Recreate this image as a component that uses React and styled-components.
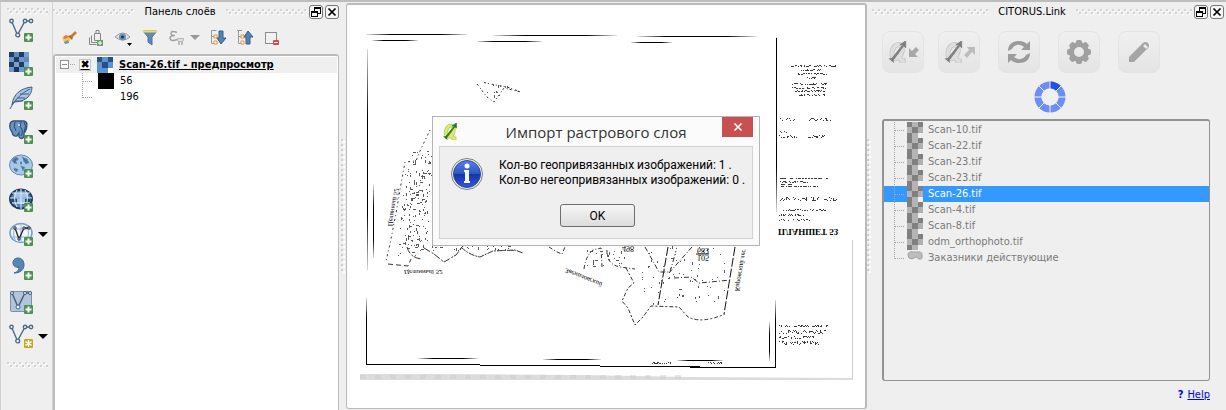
import React from 'react';
import styled, { createGlobalStyle } from 'styled-components';

const GlobalStyle = createGlobalStyle`
  * { box-sizing: border-box; }
  body {
    margin: 0;
    background: #efefef;
    color: #000;
    font: 11px/16px "DejaVu Sans Condensed", "DejaVu Sans", sans-serif;
  }
  button, input { font: inherit; margin: 0; padding: 0; }
`;

const Shell = styled.div`
  display: flex;
  min-height: 100vh;
  border-top: 2px solid #bdbdbd;
  overflow: hidden;
`;

const Grip = styled.div`
  height: 6px;
  flex: 1;
  background:
    conic-gradient(from 270deg at 2px 2px, #d2d2d2 90deg, transparent 0) 0 0 / 6px 6px repeat-x,
    conic-gradient(from 270deg at 2px 2px, #fff 90deg, transparent 0) 1px 1px / 6px 6px repeat-x,
    conic-gradient(from 270deg at 2px 2px, #d2d2d2 90deg, transparent 0) 3px 3px / 6px 6px repeat-x,
    conic-gradient(from 270deg at 2px 2px, #fff 90deg, transparent 0) 4px 4px / 6px 6px repeat-x;
`;

const Splitter = styled.div`
  flex: none;
  width: 5px;
  height: 134px;
  align-self: center;
  background:
    conic-gradient(from 270deg at 2px 2px, #cfcfcf 90deg, transparent 0) 0 0 / 5px 5px repeat-y,
    conic-gradient(from 270deg at 2px 2px, #fff 90deg, transparent 0) 2px 2px / 5px 5px repeat-y;
`;

const ToolColumn = styled.nav`
  flex: none;
  width: 53px;
  padding: 6px 4px 0 6px;
  border-left: 1px solid #cfcfcf;
  border-right: 1px solid #d4d4d4;
  display: flex;
  flex-direction: column;
`;

const ToolGrip = styled(Grip)`
  flex: none;
`;

const Tools = styled.div`
  display: grid;
  gap: 8px;
  padding: 3px 0 13px 1px;
`;

const ToolRow = styled.div`
  display: flex;
  align-items: center;
  justify-content: space-between;
  height: 26px;
`;

const PlainButton = styled.button`
  border: 0;
  background: none;
  display: flex;
  align-items: center;
  justify-content: center;
  color: inherit;
`;

const Dock = styled.section`
  flex: none;
  display: flex;
  flex-direction: column;
  width: ${(p) => p.$width};
  padding-right: 2px;
`;

const TitleBar = styled.header`
  display: flex;
  align-items: center;
  gap: 2px;
  height: 19px;
  padding-top: 1px;
`;

const TitleText = styled.h2`
  margin: 0 8px;
  font-size: 11px;
  font-weight: 400;
  line-height: 16px;
  white-space: nowrap;
`;

const FrameButton = styled.button`
  width: 14px;
  height: 14px;
  flex: none;
  display: flex;
  align-items: center;
  justify-content: center;
  background: #f6f6f6;
  border: 1px solid #777;
  border-radius: 3px;
`;

const LayerToolbar = styled.div`
  display: flex;
  align-items: center;
  gap: 10px;
  height: 33px;
  padding-left: 8px;
`;

const FilterGroup = styled.div`
  display: flex;
  gap: 4px;
`;

const LayerBox = styled.div`
  flex: 1;
  padding: 1px 1px 0;
  background: #fff;
  border: 2px solid #bcbcbc;
  border-width: 2px 1px 0 2px;
  border-radius: 3px 3px 0 0;
`;

const LayerHead = styled.label`
  display: flex;
  align-items: center;
  height: 16px;
  padding-left: 4px;
  background: #efefef;
  font-weight: 700;
  text-decoration: underline;
  white-space: nowrap;
`;

const Check = styled.input`
  appearance: none;
  width: 12px;
  height: 12px;
  margin: 0 6px 0 4px;
  border: 1px solid #c4c4c4;
  background: #fff;
  display: grid;
  place-items: center;
  &:checked::after {
    content: "✖";
    font: 11px/10px "DejaVu Sans", sans-serif;
  }
`;

const LayerName = styled.span`
  margin-left: 6px;
`;

const Legend = styled.ul`
  list-style: none;
  margin: 0;
  padding: 0;
`;

const LegendRow = styled.li`
  display: flex;
  align-items: center;
  height: 16px;
  padding-left: 26px;
`;

const Swatch = styled.span`
  width: 16px;
  height: 16px;
  margin: 0 6px 0 3px;
  background: ${(p) => p.$color};
`;

const MapPane = styled.main`
  flex: 1;
  min-width: 0;
  position: relative;
  margin: 1px 0;
  background: #fff;
  border: 2px solid #bababa;
  border-width: 2px 2px 1px 1px;
  border-radius: 3px;
`;

const MapCanvas = styled.svg`
  display: block;
  width: 100%;
  height: 100%;
`;

const Dialog = styled.div`
  position: absolute;
  left: 85px;
  top: 111px;
  width: 328px;
  padding: 0 6px 6px;
  background: #fbfbfb;
  border: 1px solid #b4b4b4;
`;

const DialogHead = styled.div`
  display: flex;
  height: 29px;
  padding-left: 4px;
  align-items: center;
`;

const DialogTitle = styled.h1`
  flex: 1;
  margin: 0;
  padding-left: 12px;
  text-align: center;
  color: #333;
  font: 400 15px/22px "Open Sans", "Noto Sans", sans-serif;
`;

const CloseButton = styled(PlainButton)`
  align-self: flex-start;
  width: 31px;
  height: 20px;
  background: #c75050;
`;

const DialogBody = styled.div`
  display: grid;
  grid-template-columns: 34px 1fr;
  column-gap: 15px;
  row-gap: 13px;
  padding: 10px 20px 11px 10px;
  background: #efefef;
  border: 1px solid #d2d2d2;
`;

const Message = styled.p`
  margin: 0;
  padding-top: 1px;
  font: 12px/15px Roboto, "Noto Sans", sans-serif;
  white-space: nowrap;
`;

const OkButton = styled.button`
  grid-column: 1 / -1;
  justify-self: center;
  width: 75px;
  height: 23px;
  background: linear-gradient(#f6f6f6, #dcdcdc);
  border: 1px solid #6e6e6e;
  border-radius: 3px;
  font: 12px/20px Roboto, "Noto Sans", sans-serif;
`;

const Actions = styled.div`
  display: flex;
  gap: 18px;
  padding: 10px 10px 0;
`;

const ActionPair = styled.div`
  display: flex;
  gap: 14px;
`;

const ActionButton = styled(PlainButton)`
  width: 42px;
  height: 42px;
  background: linear-gradient(#f0f0f0, #e4e4e4);
  border: 1px solid #e4e4e4;
  border-radius: 8px;
`;

const Busy = styled.div`
  display: flex;
  justify-content: center;
  height: 46px;
  padding: 8px 0 0 3px;
`;

const FileBox = styled.ul`
  flex: 1;
  list-style: none;
  margin: 0 14px 0 10px;
  padding: 1px 0 0;
  border: 2px solid #929292;
  border-width: 2px 1px 1px 2px;
  border-radius: 3px;
`;

const FileRow = styled.li`
  display: flex;
  align-items: center;
  height: 16px;
  padding-left: 10px;
  white-space: nowrap;
  color: ${(p) => (p.$selected ? '#fff' : '#7b7b7b')};
  background: ${(p) => (p.$selected ? '#3399ff' : 'none')};
`;

const FileName = styled.span`
  margin-left: 5px;
`;

const HelpLine = styled.div`
  display: flex;
  justify-content: flex-end;
  gap: 4px;
  padding: 6px 14px 7px;
  color: #00f;
`;

const HelpLink = styled.a`
  color: #00f;
`;

/* ---------- icons ---------- */

const Plus = ({ x = 15, y = 15, fill = '#4d9250' }) => (
  <g>
    <rect x={x} y={y} width="9" height="9" rx="1" fill={fill} />
    <path d={`M${x + 4.5} ${y + 1.5}v6M${x + 1.5} ${y + 4.5}h6`} stroke="#fff" strokeWidth="2" />
  </g>
);

const Nodes = () => (
  <g fill="#f4f7fa" stroke="#4b6a86" strokeWidth="1.4">
    <path d="M2.5 3l6 14L16 3h5" fill="none" />
    <circle cx="2.5" cy="3" r="1.7" />
    <circle cx="8.7" cy="17" r="1.9" />
    <circle cx="16" cy="3" r="1.7" />
    <circle cx="22" cy="3" r="1.7" />
  </g>
);

const Checker = ({ size, colors }) => (
  <svg width={size} height={size} viewBox="0 0 3 3" shapeRendering="crispEdges">
    {colors.map((c, i) => (
      <rect key={i} x={i % 3} y={Math.floor(i / 3)} width="1" height="1" fill={c} />
    ))}
  </svg>
);

const RASTER = [
  '#243c5c', '#5b8cc4', '#243c5c', '#74a0d4',
  '#6a98ce', '#243c5c', '#6a98ce', '#5b8cc4',
  '#243c5c', '#74a0d4', '#243c5c', '#86aede',
  '#6a98ce', '#1f3552', '#6a98ce', '#243c5c',
];

const toolArt = {
  vector: <><Nodes /><Plus /></>,
  raster: (
    <>
      {RASTER.map((c, i) => (
        <rect key={i} x={(i % 4) * 5} y={Math.floor(i / 4) * 5} width="5" height="5" fill={c} />
      ))}
      <Plus />
    </>
  ),
  feather: (
    <>
      <path d="M3 19C4 8 12 2 23 1c0 5-2 8-5 11-4 3-9 4-13 4z" fill="#a6c4e2" stroke="#3e5f83" />
      <path d="M1 23C5 15 12 7 21 3M8 12h8M11 8h9M6 15h8" stroke="#3e5f83" fill="none" />
      <Plus />
    </>
  ),
  elephant: (
    <>
      <path d="M1 4Q2 0 7 1q4 0 6 0 4-1 5 3 0 5-2 8l-1 1v4q-3 3-5 0v-4l-2 3q-4 1-5-4Q0 8 1 4z" fill="#6794c0" stroke="#2f5078" strokeWidth="1.3" />
      <path d="M6 2q-2 5 1 9M12 2q-2 5 1 8 1 3-1 6M15 2q3 4 0 10" stroke="#2a4a70" fill="none" />
      <circle cx="10" cy="5" r="1" fill="#e4eef8" />
      <Plus />
    </>
  ),
  earth: (
    <>
      <ellipse cx="12" cy="11" rx="11.5" ry="10" fill="#a9c8e8" stroke="#5d8dbe" />
      <path d="M4 5l3-2 3 2-3 2 1 3-3-1-2-2zM13 3l5 2 2 4-3 1-2-2-1-3zM5 14l4 1-1 3-3-2zM12 12l4 1-2 4zM11 8h2v2h-2z" fill="#4a749e" stroke="#6b93bb" strokeDasharray="2 2" />
      <Plus />
    </>
  ),
  globe: (
    <>
      <ellipse cx="12" cy="11" rx="11" ry="9.5" fill="#5683b4" stroke="#1f3b60" strokeWidth="2" />
      <path d="M5 5h14v4H5zM8 11h8v5H8z" fill="#9fc2e6" />
      <path d="M2 10h6v4H3zM16 10h6l-1 4h-5z" fill="#23446c" />
      <path d="M1 10h22M3 5h18M3 15h18M12 1v20M8 2q-5 8 0 17M16 2q5 8 0 17" stroke="#dfeaf6" fill="none" />
      <Plus />
    </>
  ),
  wfs: (
    <>
      <ellipse cx="12" cy="11" rx="11" ry="9.5" fill="#f1f6fc" stroke="#6d9cd2" strokeWidth="1.5" />
      <path d="M1 7h22M1 15h22M12 1v20M7 2q-5 9 0 18M17 2q5 9 0 18" stroke="#8db3de" fill="none" />
      <path d="M6 6l4 11 5-11h5" stroke="#222" strokeWidth="1.3" fill="none" />
      <g fill="#fff" stroke="#222"><circle cx="6" cy="6" r="1.2" /><circle cx="10" cy="17" r="1.2" /><circle cx="15" cy="6" r="1.2" /><circle cx="20" cy="6" r="1.2" /></g>
      <Plus />
    </>
  ),
  comma: (
    <>
      <path d="M5 17c4-1 5-4 5-6-3 1-6-1-6-4 0-4 3-5 5-5 4 0 6 3 6 7 0 5-4 8-10 8z" fill="#5686b4" stroke="#3c658f" />
      <Plus />
    </>
  ),
  virtual: (
    <>
      <rect x="1.5" y="1.5" width="21" height="20" rx="1" fill="#b2c5da" stroke="#7890aa" />
      <path d="M3 3l6 14 7-14h5" stroke="#42607c" strokeWidth="1.4" fill="none" />
      <g fill="#eef4fa" stroke="#42607c"><circle cx="3" cy="3" r="1.5" /><circle cx="9" cy="17" r="2" /><circle cx="16" cy="3" r="1.5" /><circle cx="21" cy="3" r="1.5" /></g>
      <Plus />
    </>
  ),
  newLayer: (
    <>
      <Nodes />
      <rect x="15" y="15" width="9" height="9" rx="1" fill="#cda61c" />
      <path d="M19.5 16v7M16.5 17.7l6 3.6M22.5 17.7l-6 3.6" stroke="#fff" strokeWidth="1.4" />
    </>
  ),
};

const tools = [
  ['vector', 'Добавить векторный слой'],
  ['raster', 'Добавить растровый слой'],
  ['feather', 'Добавить слой SpatiaLite'],
  ['elephant', 'Добавить слой PostGIS', true],
  ['earth', 'Добавить слой WMS', true],
  ['globe', 'Добавить слой WCS'],
  ['wfs', 'Добавить слой WFS', true],
  ['comma', 'Добавить текстовый слой'],
  ['virtual', 'Добавить виртуальный слой'],
  ['newLayer', 'Создать слой', true],
];

const Caret = ({ color = '#000' }) => (
  <svg width="10" height="5" viewBox="0 0 10 5"><path d="M0 0h10L5 5z" fill={color} /></svg>
);

const layerArt = {
  style: (
    <>
      <path d="M1 9l4-3 5 2-2 6-4 1z" fill="#f6c945" />
      <path d="M2 8l3-2 3 2-4 2z" fill="#ef6d5b" /><path d="M3 13l4-2 1 3-4 1z" fill="#5d97d6" />
      <path d="M7 7l4 4 1-3-2-2z" fill="#a5622c" /><path d="M10 8l5-5" stroke="#c77b36" strokeWidth="2.6" />
    </>
  ),
  group: (
    <>
      <path d="M1.5 8.5v7h7M3.5 6.5v7h7M6.5 4.5h6v7h-6zM8 4.500V1.500h3v3" fill="none" stroke="#858585" />
      <rect x="9" y="11" width="6" height="6" fill="#6aa06c" /><path d="M12 12v4M10 14h4" stroke="#fff" />
    </>
  ),
  eye: (
    <>
      <path d="M0 8q8-8 15 0-7 6-15 0z" fill="#e2e2e2" stroke="#9b9b9b" />
      <circle cx="7.5" cy="8" r="3.500" fill="#6a93bd" /><circle cx="7.500" cy="8" r="1.500" fill="#1f3349" />
      <path d="M12 14h5l-2.500 3z" fill="#000" />
    </>
  ),
  funnel: (
    <>
      <path d="M1 2h14l-5 6v8l-4-3V8z" fill="#5c8abb" stroke="#4a729d" /><path d="M1 1.500h14v2H1z" fill="#f2dc54" />
    </>
  ),
  epsilon: (
    <>
      <path d="M8 3.500Q2 1 2 4.500 2 6.500 6 6.500 1 6.500 1 9.500 2 13 8 10.500" fill="none" stroke="#a2a2a2" strokeWidth="1.500" />
      <path d="M8.500 9.500h6v2l-1 1v3h-1v-3h-2v3h-1v-3l-1-1z" fill="#ddd" stroke="#b5b5b5" />
    </>
  ),
  expand: (
    <>
      <path d="M1.500 1.500h5M1.500 1.500v13h6M1.500 7.500h3" fill="none" stroke="#9a9a9a" />
      <path d="M4 6h3v3H4zM4 12h3v3H4z" fill="#fff" stroke="#e8943a" />
      <path d="M9 2h4v7h3l-5 6-4-6h2z" fill="#5482b5" stroke="#355e8c" />
    </>
  ),
  collapse: (
    <>
      <path d="M0 1.500h5M1.500 1.500v13h5M1.500 7.500h3" fill="none" stroke="#9a9a9a" />
      <path d="M4 6h3v3H4zM4 12h3v3H4z" fill="#fff" stroke="#e8943a" />
      <path d="M9 15h4V8h3l-5-6-4 6h2z" fill="#5482b5" stroke="#355e8c" />
    </>
  ),
  remove: (
    <>
      <rect x="1.500" y="3.500" width="11" height="11" fill="#f1f1f1" stroke="#8d8d8d" />
      <rect x="9" y="11" width="6" height="5" rx="1" fill="#e0454b" /><path d="M10 13.500h4" stroke="#fff" />
    </>
  ),
};

const LayerTool = ({ art, label }) => (
  <PlainButton type="button" aria-label={label}>
    <svg width="17" height="18" viewBox="0 0 17 18">{layerArt[art]}</svg>
  </PlainButton>
);

const RestoreIcon = () => (
  <svg width="10" height="10" viewBox="0 0 10 10" shapeRendering="crispEdges">
    <path d="M3 0h7v7H7V6h2V2H4v2H3z" />
    <path d="M0 4h7v6H0zM1 6v3h5V6z" fillRule="evenodd" />
  </svg>
);

const CrossIcon = ({ color = '#000' }) => (
  <svg width="10" height="10" viewBox="0 0 10 10">
    <path d="M1.500 1.500l7 7M8.500 1.500l-7 7" stroke={color} strokeWidth="1.700" />
  </svg>
);

const QLogo = ({ gray, size = 16 }) => (
  <svg width={size} height={size + 2} viewBox="0 0 20 23">
    <g fill="none" stroke={gray ? '#c6c6c6' : '#b3c94a'} strokeWidth="5.400">
      <ellipse cx="9" cy="11" rx="5" ry="7.500" transform="rotate(20 9 11)" /><path d="M9 15l5 6h4" />
    </g>
    <g fill="none" stroke={gray ? '#dedede' : '#dcea72'} strokeWidth="3.600">
      <ellipse cx="9" cy="11" rx="5" ry="7.500" transform="rotate(20 9 11)" /><path d="M9 15l5 6h3" />
    </g>
    <path d="M3 19L15 4l-3 0 6-4v7l-2-2L5 20z" fill={gray ? '#808080' : '#2c7a2c'} stroke={gray ? '#808080' : '#2c7a2c'} />
    <path d="M0 18h5l1 5-3-2z" fill={gray ? '#808080' : '#2c7a2c'} />
  </svg>
);

const DiagonalArrow = ({ out }) => (
  <svg width="11" height="12" viewBox="0 0 11 12">
    <path d={out ? 'M3 1h8v8L8 6l-5 6-3-3 5-5z' : 'M1 2l3 3 4-4 3 3-4 4 3 3H1z'} fill={out ? '#bcbcbc' : '#a8a8a8'} />
  </svg>
);

const SyncIcon = () => (
  <svg width="24" height="24" viewBox="0 0 24 24" fill="#9b9b9b">
    <path d="M1 11C1 4 6 1 12 1c3 0 6 1 8 3l3-3v9h-9l3-3C12 3 7 5 5 9z" />
    <path d="M23 13c0 7-5 10-11 10-3 0-6-1-8-3l-3 3v-9h9l-3 3c5 4 10 2 12-2z" />
  </svg>
);

const GearIcon = () => (
  <svg width="24" height="24" viewBox="-12 -12 24 24">
    <circle r="7.500" fill="none" stroke="#a0a0a0" strokeWidth="5" />
    {[0, 45, 90, 135, 180, 225, 270, 315].map((a) => (
      <rect key={a} x="-3" y="-12" width="6" height="5" rx="2" fill="#a0a0a0" transform={`rotate(${a})`} />
    ))}
  </svg>
);

const PencilIcon = () => (
  <svg width="22" height="22" viewBox="0 0 22 22">
    <path d="M1 21v-5L15 2q2-2 5 0 2 3 0 5L6 21z" fill="#a5a5a5" />
    <path d="M15 5l2-2 3 3-2 2z" fill="#e8e8e8" />
  </svg>
);

const Spinner = () => (
  <svg width="32" height="32" viewBox="-16 -16 32 32" role="img" aria-label="Загрузка">
    <circle r="12" fill="none" stroke="#6d8ff5" strokeWidth="7" />
    <path d="M0-12A12 12 0 0 1 8.500-8.500" fill="none" stroke="#2350ea" strokeWidth="7" />
    <path d="M0-16v32M-16 0h32M-11.500-11.500l23 23M11.500-11.500l-23 23" stroke="#efefef" />
    <circle r="8.500" fill="#efefef" />
  </svg>
);

const InfoIcon = () => (
  <svg width="34" height="34" viewBox="0 0 34 34">
    <defs>
      <linearGradient id="ball" x1="0" y1="0" x2="0" y2="1">
        <stop offset="0" stopColor="#5b83e0" /><stop offset=".48" stopColor="#2c57c4" />
        <stop offset=".52" stopColor="#1236a4" /><stop offset="1" stopColor="#3a54dc" />
      </linearGradient>
    </defs>
    <circle cx="17" cy="17" r="15.500" fill="#f0f0f0" stroke="#7d7d7d" />
    <circle cx="17" cy="17" r="13.500" fill="url(#ball)" stroke="#2b4aa0" />
    <circle cx="17" cy="9" r="2.500" fill="#fff" />
    <path d="M14 13h5v11h1v2h-6v-2h1v-9h-1z" fill="#f4f4f4" />
  </svg>
);

const TreeElbow = ({ last }) => (
  <svg width="13" height="16" viewBox="0 0 13 16" shapeRendering="crispEdges">
    <path d={`M.5 0V${last ? 9 : 16}M.5 8.500H10`} fill="none" stroke="#a5a5a5" strokeDasharray="1 1" />
  </svg>
);

const Expander = () => (
  <svg width="15" height="16" viewBox="0 0 15 16" shapeRendering="crispEdges">
    <path d="M.5 3.500h8v8h-8zM2 7.500h5" fill="#fff" stroke="#8f8f8f" />
    <path d="M10 7.500h5" stroke="#a5a5a5" strokeDasharray="1 1" />
  </svg>
);

const BLUE = ['#27507f', '#5b93d6', '#27507f', '#5b93d6', '#27507f', '#5b93d6', '#5b93d6', '#5b93d6', '#fff'];
const GRAY = ['#808080', '#b4b4b4', '#808080', '#b4b4b4', '#808080', '#b0b0b0', '#808080', '#b4b4b4', '#efefef'];

/* ---------- scanned sheet ---------- */

function random(seed) {
  let s = seed;
  return () => {
    s = (s * 16807) % 2147483647;
    return s / 2147483647;
  };
}

// A row of tiny illegible handwriting: short ticks along a baseline.
function scrawl(x, y, w, h, seed) {
  const r = random(seed * 7919 + 13);
  let d = '';
  for (let i = 0; i < w; i += 1) {
    const v = r();
    if (v < 0.35) continue;
    const top = Math.floor(r() * h);
    d += v < 0.6 ? `M${x + i + 0.5} ${y + top}v${1 + Math.floor(r() * (h - top))}` : `M${x + i} ${y + top + 0.5}h1`;
  }
  return d;
}

// Specks spread over a slanted patch of the sheet.
function specks(x1, x2, y1, y2, shift, count, seed) {
  const r = random(seed * 104729 + 7);
  let d = '';
  for (let i = 0; i < count; i += 1) {
    const t = r();
    const x = Math.round(x1 + (x2 - x1) * r() + shift * t);
    const y = Math.round(y1 + (y2 - y1) * t);
    const v = r();
    d += v < 0.3 ? `M${x + 0.5} ${y}v${v < 0.1 ? 3 : 2}` : `M${x} ${y + 0.5}h${v > 0.85 ? 3 : 1}`;
  }
  return d;
}

const notes = [
  [787, 65, 49, 2], [800, 69, 23, 2], [796, 73, 31, 2], [806, 77, 10, 2],
  [792, 83, 38, 2], [792, 87, 34, 2], [795, 90, 31, 2], [799, 94, 26, 2],
  [780, 118, 15, 3], [809, 118, 22, 3], [780, 131, 7, 2], [779, 135, 18, 3], [808, 135, 20, 3],
  [780, 178, 48, 1], [780, 181, 30, 2], [780, 184, 12, 1], [780, 186, 40, 1],
  [778, 197, 42, 4], [823, 197, 14, 4],
  [779, 209, 47, 2], [779, 214, 26, 2], [779, 219, 34, 2],
  [779, 325, 49, 2], [779, 330, 48, 4], [779, 336, 36, 3], [779, 341, 40, 4],
  [652, 362, 19, 2], [708, 362, 15, 2],
];

const ScanMap = () => (
  <MapCanvas viewBox="347 5 518 403" preserveAspectRatio="xMidYMid meet" role="img" aria-label="Растровый слой Scan-26.tif">
    <defs>
      <linearGradient id="fade">
        <stop offset="0" stopColor="#000" stopOpacity=".1" /><stop offset=".25" stopColor="#000" />
        <stop offset=".75" stopColor="#000" /><stop offset="1" stopColor="#000" stopOpacity=".1" />
      </linearGradient>
      <linearGradient id="fadeV" x1="0" y1="0" x2="0" y2="1">
        <stop offset="0" stopColor="#000" stopOpacity=".15" /><stop offset=".3" stopColor="#000" />
        <stop offset=".75" stopColor="#000" /><stop offset="1" stopColor="#000" stopOpacity=".15" />
      </linearGradient>
    </defs>
    <g fill="url(#fade)" shapeRendering="crispEdges">
      <rect x="366" y="34" width="101" height="1" /><rect x="493" y="35" width="124" height="1" /><rect x="637" y="36" width="120" height="1" />
      <rect x="372" y="40" width="46" height="1" /><rect x="477" y="41" width="65" height="1" /><rect x="631" y="42" width="41" height="1" />
      <rect x="418" y="358" width="60" height="1" /><rect x="543" y="359" width="58" height="1" /><rect x="677" y="360" width="46" height="1" />
    </g>
    <g fill="#000" shapeRendering="crispEdges">
      <rect x="366" y="364" width="114" height="1" /><rect x="480" y="365" width="120" height="1" /><rect x="600" y="366" width="100" height="1" /><rect x="690" y="367" width="86" height="1" />
    </g>
    <g fill="url(#fadeV)" shapeRendering="crispEdges">
      <rect x="367" y="49" width="1" height="221" /><rect x="366" y="298" width="1" height="67" /><rect x="373" y="185" width="1" height="73" />
      <rect x="776" y="37" width="1" height="175" /><rect x="775" y="300" width="1" height="68" /><rect x="769" y="322" width="1" height="39" />
    </g>
    <path d="M366.500 325v39M776.500 38v130M775.500 322v45" stroke="#000" shapeRendering="crispEdges" />
    <path d="M360 374h70l150 1 110 2 163 1v2H360z" fill="#dcdcdc" />
    <path d="M360 377h330" stroke="#cecece" strokeWidth="4" strokeDasharray="6 9" opacity=".5" />
    <path d="M852.500 240v139" stroke="#cfcfcf" />

    <g fill="none" stroke="#333" strokeWidth="1">
      <path d="M477 84l10 13 7 5 10-14 17 4-14-5-11-2-15-3" strokeDasharray="2 3 1 2" />
      <path d="M430 130l-10 21-4 10-11 1-4 22-4 24-7 36-4 17" strokeDasharray="1 3 2 3" />
      <path d="M388 264l20 2 3-7" strokeDasharray="5 3" />
      <path d="M407 247q3 11 15 12M424 248l10 6 10 8 12-7 7-9" strokeDasharray="7 2 2 1" />
      <path d="M461 247q8 8 19 10l13-6 22-1 8 3" strokeDasharray="6 1 2 1" />
      <path d="M549 247l8 5 5 2 3-7M584 269q2-14 9-19l8-2 1 19M607 250q-1 14 13 17l15 2" strokeDasharray="4 2 1 2" />
      <path d="M626 268l8 15-6 5-6 13 6 7 7 17 8-8 8-11 28 1 9 10q14 7 37-3" strokeDasharray="4 2 2 2" />
      <path d="M735 247l-11 67M668 247l-10 58" strokeDasharray="9 2" stroke="#111" />
      <path d="M645 247l14 25h11l6-21M674 278l17-1 8 6 32-3M692 247l-23 26" strokeDasharray="5 2 1 2" />
    </g>
    <g fill="none" stroke="#5a5a5a" shapeRendering="crispEdges">
      <path d={specks(410, 434, 150, 255, -14, 130, 3)} />
      <path d={specks(405, 434, 170, 250, -8, 55, 8)} />
      <path d={specks(430, 520, 246, 250, 0, 26, 5)} />
      <path d={specks(640, 728, 246, 305, 0, 70, 12)} />
      <path d={specks(586, 624, 247, 266, 0, 28, 17)} />
      <path d={specks(483, 508, 84, 96, 0, 12, 19)} />
      {notes.map(([x, y, w, h], i) => <path key={i} d={scrawl(x, y, w, h, i + 2)} stroke="#3a3a3a" />)}
    </g>
    <g fill="#000" fontFamily="Liberation Serif, serif">
      <text transform="translate(778 229) scale(1 -1)" fontSize="9" fontWeight="700">ПЛАНШЕТ 53</text>
      <text transform="translate(404 270) scale(1 -1)" fontSize="7" fontStyle="italic">Целинный 52</text>
      <text transform="translate(388 226) rotate(-80) scale(1 -1)" fontSize="7" fontStyle="italic">Целинный 52</text>
      <text transform="translate(566 268) rotate(22) scale(1 -1)" fontSize="7" fontStyle="italic">Звениловский</text>
      <text transform="translate(735 291) rotate(-80) scale(1 -1)" fontSize="7" fontStyle="italic">Кировский лес</text>
      <text transform="translate(697 248) scale(1 -1)" fontSize="8">683</text>
      <text transform="translate(697 255) scale(1 -1)" fontSize="8">105</text>
      <text transform="translate(622 246) scale(1 -1)" fontSize="8">498</text>
      <path d="M696 254h13" stroke="#222" />
    </g>
  </MapCanvas>
);

const WindowButtons = () => (
  <>
    <FrameButton type="button" aria-label="Открепить"><RestoreIcon /></FrameButton>
    <FrameButton type="button" aria-label="Закрыть"><CrossIcon /></FrameButton>
  </>
);

const files = ['Scan-10.tif', 'Scan-22.tif', 'Scan-23.tif', 'Scan-23.tif', 'Scan-26.tif', 'Scan-4.tif', 'Scan-8.tif', 'odm_orthophoto.tif', 'Заказники действующие'];

export default function App() {
  return (
    <>
      <GlobalStyle />
      <Shell>
        <ToolColumn>
          <ToolGrip />
          <Tools>
            {tools.map(([id, label, menu]) => (
              <ToolRow key={id}>
                <PlainButton type="button" aria-label={label}>
                  <svg width="26" height="26" viewBox="-1 -1 26 26">{toolArt[id]}</svg>
                </PlainButton>
                {menu && <PlainButton type="button" aria-label={`${label}: меню`}><Caret /></PlainButton>}
              </ToolRow>
            ))}
          </Tools>
          <ToolGrip />
        </ToolColumn>

        <Dock $width="288px">
          <TitleBar>
            <Grip />
            <TitleText>Панель слоёв</TitleText>
            <Grip />
            <WindowButtons />
          </TitleBar>
          <LayerToolbar>
            <LayerTool art="style" label="Стиль" />
            <LayerTool art="group" label="Добавить группу" />
            <LayerTool art="eye" label="Видимость" />
            <LayerTool art="funnel" label="Фильтр" />
            <FilterGroup>
              <LayerTool art="epsilon" label="Фильтр по выражению" />
              <PlainButton type="button" aria-label="Меню фильтра"><Caret color="#999" /></PlainButton>
            </FilterGroup>
            <LayerTool art="expand" label="Развернуть всё" />
            <LayerTool art="collapse" label="Свернуть всё" />
            <LayerTool art="remove" label="Удалить слой" />
          </LayerToolbar>
          <LayerBox>
            <LayerHead>
              <Expander />
              <Check type="checkbox" defaultChecked />
              <Checker size="16" colors={BLUE} />
              <LayerName>Scan-26.tif - предпросмотр</LayerName>
            </LayerHead>
            <Legend>
              <LegendRow><TreeElbow /><Swatch $color="#000" />56</LegendRow>
              <LegendRow><TreeElbow last /><Swatch $color="#fff" />196</LegendRow>
            </Legend>
          </LayerBox>
        </Dock>

        <Splitter />
        <MapPane>
          <ScanMap />
          <Dialog role="dialog" aria-labelledby="dialog-title">
            <DialogHead>
              <QLogo size={15} />
              <DialogTitle id="dialog-title">Импорт растрового слоя</DialogTitle>
              <CloseButton type="button" aria-label="Закрыть"><CrossIcon color="#fff" /></CloseButton>
            </DialogHead>
            <DialogBody>
              <InfoIcon />
              <Message>
                Кол-во геопривязанных изображений: 1 .<br />
                Кол-во негеопривязанных изображений: 0 .
              </Message>
              <OkButton type="button">OK</OkButton>
            </DialogBody>
          </Dialog>
        </MapPane>
        <Splitter />

        <Dock $width="354px">
          <TitleBar>
            <Grip />
            <TitleText>CITORUS.Link</TitleText>
            <Grip />
            <WindowButtons />
          </TitleBar>
          <Actions>
            <ActionPair>
              <ActionButton type="button" aria-label="Импорт в QGIS"><QLogo gray size={20} /><DiagonalArrow /></ActionButton>
              <ActionButton type="button" aria-label="Экспорт из QGIS"><QLogo gray size={20} /><DiagonalArrow out /></ActionButton>
            </ActionPair>
            <ActionButton type="button" aria-label="Обновить"><SyncIcon /></ActionButton>
            <ActionButton type="button" aria-label="Настройки"><GearIcon /></ActionButton>
            <ActionButton type="button" aria-label="Правка"><PencilIcon /></ActionButton>
          </Actions>
          <Busy><Spinner /></Busy>
          <FileBox>
            {files.map((name, i) => (
              <FileRow key={i} $selected={i === 4}>
                <TreeElbow last={i === files.length - 1} />
                {i < 8 ? <Checker size="16" colors={GRAY} /> : (
                  <svg width="16" height="16" viewBox="0 0 16 16">
                    <path d="M1 5q0-4 5-3l4 0q5-1 5 3 1 5-3 4l-3-2-4 2Q1 9 1 5z" fill="#bdbdbd" stroke="#a2a2a2" />
                  </svg>
                )}
                <FileName>{name}</FileName>
              </FileRow>
            ))}
          </FileBox>
          <HelpLine><b>?</b><HelpLink href="#help">Help</HelpLink></HelpLine>
        </Dock>
      </Shell>
    </>
  );
}
